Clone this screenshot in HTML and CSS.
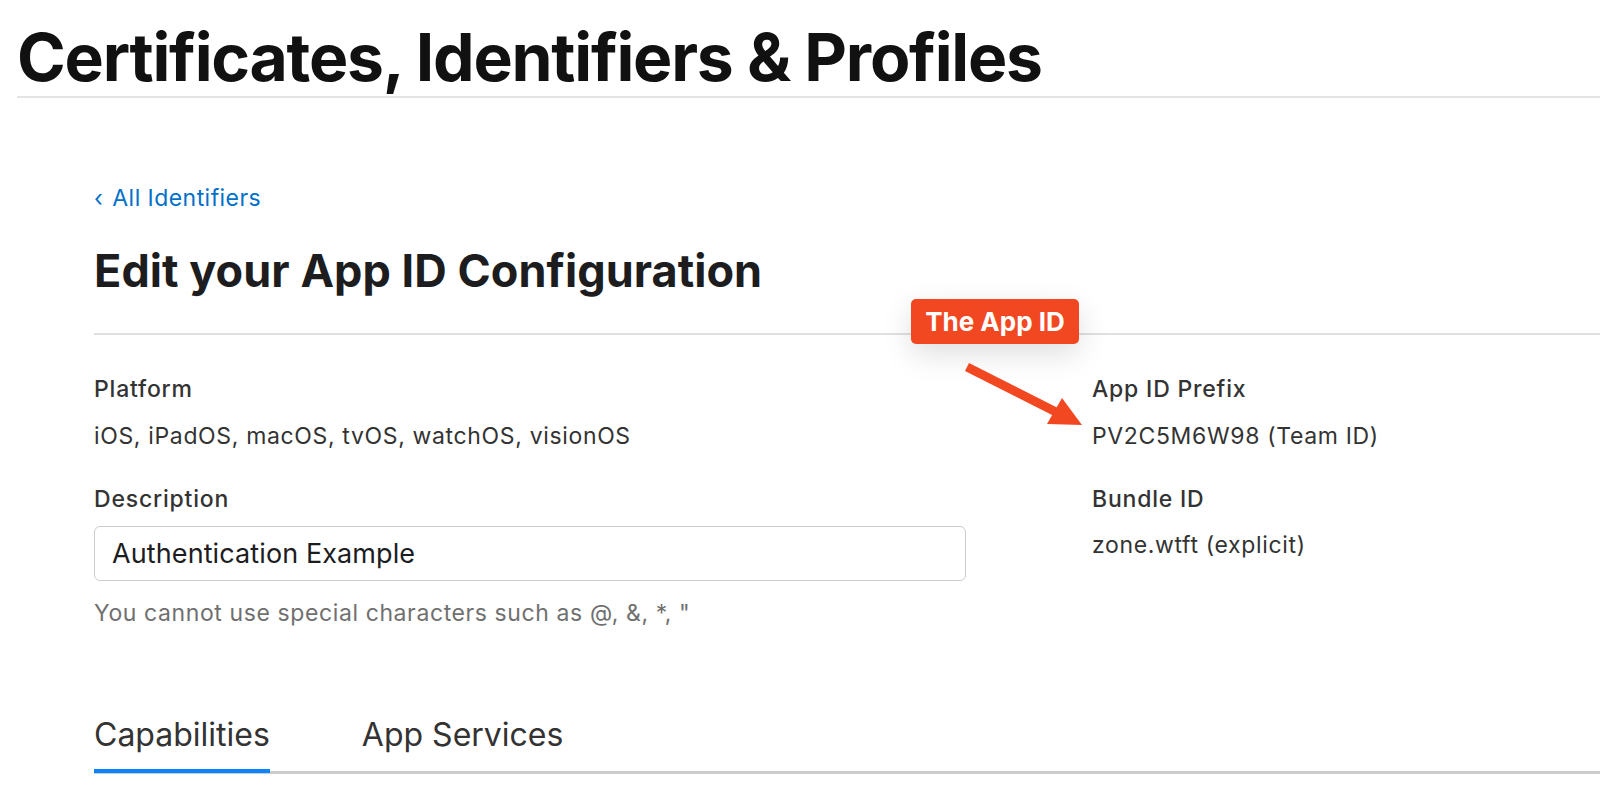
FILE: index.html
```html
<!DOCTYPE html>
<html lang="en">
<head>
<meta charset="utf-8">
<title>Edit your App ID Configuration</title>
<link rel="stylesheet" href="styles.css">
</head>
<body>
<header class="site-header">
  <h1 class="site-title">Certificates, Identifiers &amp; Profiles</h1>
</header>
<main class="main">
  <a class="back-link" href="#"><span class="chev">‹</span>All Identifiers</a>
  <h2 class="page-title">Edit your App ID Configuration</h2>
  <div class="details">
    <div class="col col-left">
      <div class="field">
        <div class="label">Platform</div>
        <div class="value">iOS, iPadOS, macOS, tvOS, watchOS, visionOS</div>
      </div>
      <div class="field field-gap">
        <div class="label">Description</div>
        <div class="textbox">Authentication Example</div>
        <div class="helper">You cannot use special characters such as @, &amp;, *, "</div>
      </div>
    </div>
    <div class="col col-right">
      <div class="field">
        <div class="label">App ID Prefix</div>
        <div class="value">PV2C5M6W98 (Team ID)</div>
      </div>
      <div class="field field-gap">
        <div class="label">Bundle ID</div>
        <div class="value value-tight">zone.wtft (explicit)</div>
      </div>
    </div>
  </div>
  <nav class="tabs">
    <div class="tab active">Capabilities</div>
    <div class="tab">App Services</div>
  </nav>
</main>
<div class="callout">The App ID</div>
<svg class="callout-arrow" width="150" height="90" viewBox="0 0 150 90">
  <line x1="17" y1="17" x2="106" y2="62" stroke="#f24822" stroke-width="9"/>
  <polygon points="132,75 112,48 97,74" fill="#f24822"/>
</svg>
</body>
</html>
```
FILE: styles.css
```css
html, body {
  margin: 0;
  padding: 0;
  background: #ffffff;
}
body {
  width: 1600px;
  height: 796px;
  overflow: hidden;
  position: relative;
  font-family: "Inter", "Liberation Sans", sans-serif;
  color: #333333;
}
.site-header {
  padding: 19px 0 0 17px;
}
.site-title {
  margin: 0;
  font-size: 66px;
  line-height: 77px;
  font-weight: 700;
  letter-spacing: -1.25px;
  color: #111111;
  border-bottom: 2px solid #e4e4e4;
}
.main {
  padding-left: 94px;
}
.back-link {
  display: block;
  margin-top: 85px;
  font-size: 23px;
  line-height: 30px;
  letter-spacing: 0.45px;
  color: #0070c9;
  text-decoration: none;
}
.chev {
  margin-right: 9px;
}
.page-title {
  margin: 30px 0 0;
  padding-bottom: 34px;
  font-size: 45px;
  line-height: 56px;
  font-weight: 700;
  letter-spacing: 0.05px;
  color: #1d1d1f;
  border-bottom: 2px solid #e0e0e0;
}
.details {
  display: flex;
  gap: 126px;
  padding-top: 39px;
}
.col-left {
  width: 872px;
}
.col-right {
  flex: 1;
}
.field-gap {
  margin-top: 33px;
}
.label {
  font-size: 23px;
  line-height: 30px;
  font-weight: 500;
  letter-spacing: 0.8px;
  color: #333333;
}
.value {
  margin-top: 17px;
  font-size: 23px;
  line-height: 30px;
  letter-spacing: 0.65px;
  color: #333333;
}
.value-tight {
  margin-top: 16px;
}
.textbox {
  margin-top: 12px;
  height: 53px;
  border: 1px solid #cccccc;
  border-radius: 6px;
  padding-left: 17px;
  font-size: 27px;
  line-height: 53px;
  letter-spacing: 0.1px;
  color: #1d1d1f;
}
.helper {
  margin-top: 17px;
  font-size: 23px;
  line-height: 30px;
  letter-spacing: 0.6px;
  color: #707070;
}
.tabs {
  display: flex;
  gap: 92px;
  margin-top: 87px;
  border-bottom: 3px solid #cccccc;
}
.tab {
  font-size: 32px;
  line-height: 40px;
  padding-bottom: 14px;
  border-bottom: 4px solid transparent;
  margin-bottom: -2px;
  color: #333333;
}
.tab.active {
  border-bottom-color: #0a84ff;
}
.callout {
  position: absolute;
  left: 911px;
  top: 299px;
  width: 168px;
  height: 45px;
  box-sizing: border-box;
  border-radius: 5px;
  background: #f24822;
  color: #ffffff;
  font-size: 26px;
  font-weight: 700;
  line-height: 45px;
  text-align: center;
  box-shadow: 0 10px 30px rgba(0, 0, 0, 0.13);
}
.callout-arrow {
  position: absolute;
  left: 950px;
  top: 350px;
}
```
